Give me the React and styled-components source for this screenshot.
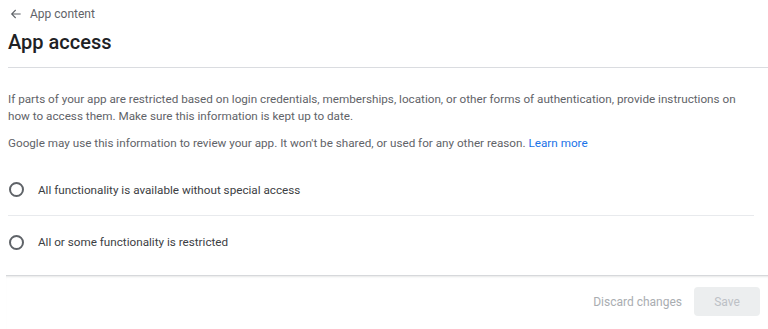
import styled, { createGlobalStyle } from 'styled-components'

const Global = createGlobalStyle`
    html, body{margin: 0; padding: 0; background: #fff;}
    body{font-family: Roboto, "Liberation Sans", Arial, sans-serif; color: #202124;}
    *{box-sizing: border-box;}
`

const Page = styled.div`
    display: flex;
    flex-direction: column;
    width: 768px;
    height: 329px;
    overflow: hidden;
`

const Header = styled.header`
    margin-left: 8px;
    padding-top: 6px;
    border-bottom: 1px solid #dadce0;
    padding-bottom: 13px;
`

const Back = styled.a`
    display: flex;
    align-items: center;
    gap: 6px;
    margin-left: 0;
    height: 16px;
    font-size: 12px;
    color: #5f6368;
    text-decoration: none;

    svg{width: 16px; height: 16px;}
`

const Title = styled.h1`
    margin: 8px 0 0;
    font-size: 20px;
    line-height: 24px;
    font-weight: 500;
    color: #202124;
`

const Body = styled.section`
    margin-left: 8px;
    padding-top: 23px;
`

const Text = styled.p`
    margin: 0 0 10px;
    font-size: 11.7px;
    line-height: 17px;
    color: #5f6368;
    max-width: 745px;

    a{color: #1a73e8; text-decoration: none;}
`

const Options = styled.div`
    display: flex;
    flex-direction: column;
    margin-top: 12px;
    margin-right: 14px;
`

const Option = styled.label`
    display: flex;
    align-items: center;
    gap: 14px;
    height: 52px;
    padding-left: 1px;
    font-size: 11.7px;
    color: #3c4043;
    border-bottom: ${p => (p.$divided ? '1px solid #e8eaed' : 'none')};
`

const Radio = styled.span`
    width: 15px;
    height: 15px;
    border: 2px solid #5f6368;
    border-radius: 50%;
    flex-shrink: 0;
`

const Footer = styled.footer`
    margin-top: auto;
    margin-left: 6px;
    border-top: 1px solid #d6d8db;
    box-shadow: inset 0 2px 2px -1px rgba(60, 64, 67, 0.12);
    display: flex;
    justify-content: flex-end;
    align-items: center;
    gap: 12px;
    height: 54px;
    padding: 0 8px 2px 0;
`

const Button = styled.button`
    font-family: inherit;
    font-size: 12px;
    height: 29px;
    border: none;
    border-radius: 4px;
    color: ${p => (p.$filled ? '#bdc1c6' : '#a9adb1')};
    background: ${p => (p.$filled ? '#eceeef' : 'transparent')};
    padding: 0 ${p => (p.$filled ? '20px' : '0')};
    min-width: ${p => (p.$filled ? '66px' : 'auto')};
`

export default function App() {
    return (
        <Page>
            <Global />
            <Header>
                <Back href="#">
                    <svg viewBox="0 0 24 24" fill="none" stroke="#5f6368" strokeWidth="1.6">
                        <path d="M19 12H5.5M11.5 6l-6 6 6 6" />
                    </svg>
                    App content
                </Back>
                <Title>App access</Title>
            </Header>
            <Body>
                <Text>
                    If parts of your app are restricted based on login credentials, memberships, location, or other forms of authentication, provide instructions on how to access them. Make sure this information is kept up to date.
                </Text>
                <Text>
                    Google may use this information to review your app. It won't be shared, or used for any other reason. <a href="#">Learn more</a>
                </Text>
                <Options>
                    <Option $divided>
                        <Radio />
                        All functionality is available without special access
                    </Option>
                    <Option>
                        <Radio />
                        All or some functionality is restricted
                    </Option>
                </Options>
            </Body>
            <Footer>
                <Button>Discard changes</Button>
                <Button $filled>Save</Button>
            </Footer>
        </Page>
    )
}
